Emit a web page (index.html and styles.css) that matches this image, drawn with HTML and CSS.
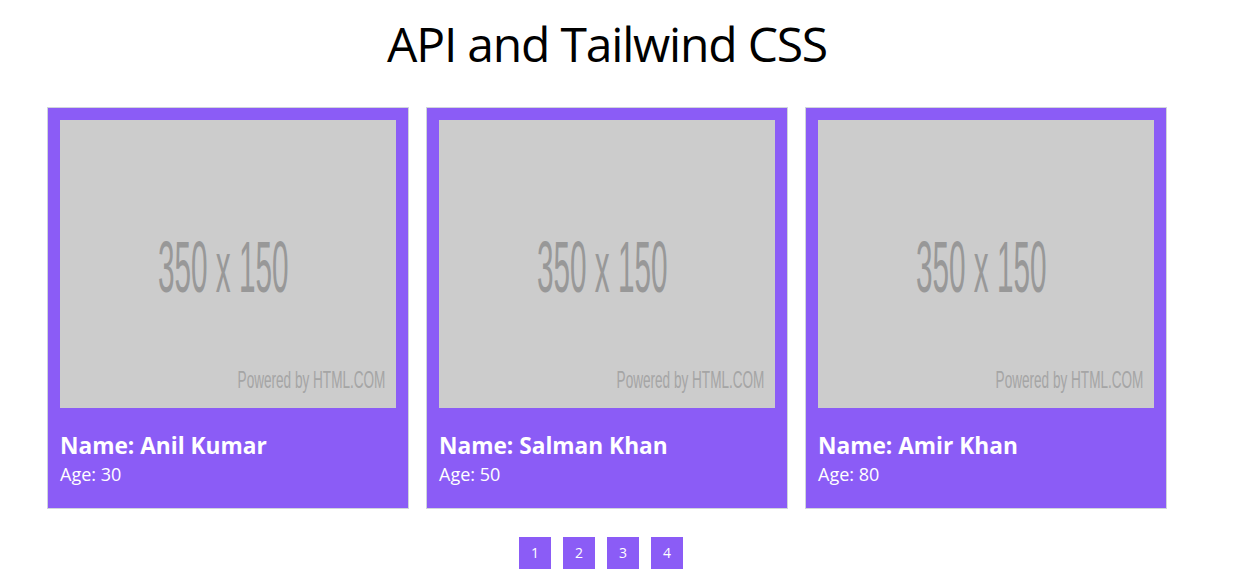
FILE: index.html
```html
<!DOCTYPE html>
<html lang="en">
<head>
<meta charset="utf-8">
<title>API and Tailwind CSS</title>
<link rel="stylesheet" href="styles.css">
</head>
<body>
<div class="page">
  <h1 class="title">API and Tailwind CSS</h1>
  <div class="cards">
    <div class="card">
      <svg class="thumb" viewBox="0 0 350 150" preserveAspectRatio="none">
        <rect width="350" height="150" fill="#cccccc"/>
        <text x="102" y="89.6" font-size="37.8" textLength="136" lengthAdjust="spacingAndGlyphs" class="ph-big">350 x 150</text>
        <text x="185" y="139.6" font-size="12" textLength="154" lengthAdjust="spacingAndGlyphs" class="ph-small">Powered by HTML.COM</text>
      </svg>
      <div class="info">
        <div class="name">Name: Anil Kumar</div>
        <div class="age">Age: 30</div>
      </div>
    </div>
    <div class="card">
      <svg class="thumb" viewBox="0 0 350 150" preserveAspectRatio="none">
        <rect width="350" height="150" fill="#cccccc"/>
        <text x="102" y="89.6" font-size="37.8" textLength="136" lengthAdjust="spacingAndGlyphs" class="ph-big">350 x 150</text>
        <text x="185" y="139.6" font-size="12" textLength="154" lengthAdjust="spacingAndGlyphs" class="ph-small">Powered by HTML.COM</text>
      </svg>
      <div class="info">
        <div class="name">Name: Salman Khan</div>
        <div class="age">Age: 50</div>
      </div>
    </div>
    <div class="card">
      <svg class="thumb" viewBox="0 0 350 150" preserveAspectRatio="none">
        <rect width="350" height="150" fill="#cccccc"/>
        <text x="102" y="89.6" font-size="37.8" textLength="136" lengthAdjust="spacingAndGlyphs" class="ph-big">350 x 150</text>
        <text x="185" y="139.6" font-size="12" textLength="154" lengthAdjust="spacingAndGlyphs" class="ph-small">Powered by HTML.COM</text>
      </svg>
      <div class="info">
        <div class="name">Name: Amir Khan</div>
        <div class="age">Age: 80</div>
      </div>
    </div>
  </div>
  <div class="pager">
    <button class="page-btn">1</button>
    <button class="page-btn">2</button>
    <button class="page-btn">3</button>
    <button class="page-btn">4</button>
  </div>
</div>
</body>
</html>
```

FILE: styles.css
```css
html, body {
  margin: 0;
  padding: 0;
  background: #ffffff;
}

body {
  font-family: "Open Sans", "Noto Sans", sans-serif;
  color: #000;
}

.page {
  width: 1214px;
  display: flex;
  flex-direction: column;
  align-items: center;
}

.title {
  margin: 20px 0 0 0;
  font-size: 48px;
  line-height: 48px;
  font-weight: 400;
  letter-spacing: -1.2px;
  text-align: center;
}

.cards {
  align-self: flex-start;
  margin: 39px 0 0 47px;
  display: flex;
  gap: 17px;
}

.card {
  width: 362px;
  box-sizing: border-box;
  background: #8b5cf6;
  border: 1px solid #d1d5db;
  padding: 12px 12px 20px 12px;
  display: flex;
  flex-direction: column;
}

.thumb {
  display: block;
  width: 336px;
  height: 288px;
}

.ph-big {
  font-family: "Liberation Sans", sans-serif;
  fill: #989898;
}

.ph-small {
  font-family: "Liberation Sans", sans-serif;
  fill: #a5a5a5;
}

.info {
  padding: 24px 0 0 0;
  color: #ffffff;
}

.name {
  font-size: 22.7px;
  line-height: 28px;
  font-weight: 700;
}

.age {
  font-size: 18px;
  line-height: 28px;
}

.pager {
  margin-top: 28px;
  display: flex;
}

.page-btn {
  width: 32px;
  height: 32px;
  margin: 0 12px 0 0;
  padding: 0;
  border: none;
  background: #8b5cf6;
  color: #ffffff;
  font-family: "Open Sans", sans-serif;
  font-size: 14px;
  line-height: 32px;
  text-align: center;
}
```
